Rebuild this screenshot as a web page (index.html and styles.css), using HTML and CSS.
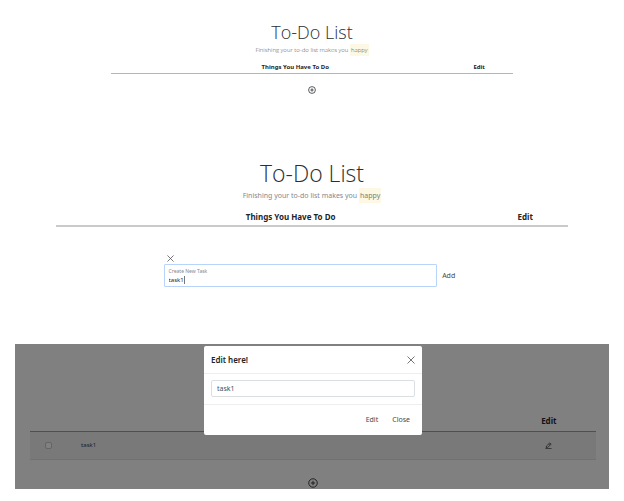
FILE: index.html
```html
<!DOCTYPE html>
<html lang="en">
<head>
<meta charset="utf-8">
<meta name="viewport" content="width=device-width, initial-scale=1">
<title>To-Do List</title>
<link rel="stylesheet" href="styles.css">
</head>
<body>
<svg class="sprite" aria-hidden="true">
  <symbol id="plus" viewBox="0 0 16 16"><path d="M8 1.2a6.8 6.8 0 1 0 0 13.6A6.8 6.8 0 0 0 8 1.2zM8 4.6v6.8M4.6 8h6.8" fill="none" stroke="currentColor" stroke-width="1.5"/></symbol>
  <symbol id="cross" viewBox="0 0 16 16"><path d="M1 1l14 14M15 1L1 15" fill="none" stroke="currentColor" stroke-width="1.8"/></symbol>
  <symbol id="pen" viewBox="0 0 16 16"><path d="M1 15h14M2.5 13l1-4L11 2l3 3-7.500 7zM9 4l3 3" fill="none" stroke="currentColor" stroke-width="1.7"/></symbol>
</svg>
<main>
  <section class="panel small">
    <h1>To-Do List</h1>
    <p class="lead">Finishing your to-do list makes you <mark>happy</mark></p>
    <table>
      <thead><tr><td class="check"></td><th scope="col">Things You Have To Do</th><th scope="col" class="edit">Edit</th></tr></thead>
    </table>
    <button class="icon-button plus" aria-label="Add task"><svg><use href="#plus"/></svg></button>
  </section>

  <section class="panel medium">
    <h1>To-Do List</h1>
    <p class="lead">Finishing your to-do list makes you <mark>happy</mark></p>
    <table>
      <thead><tr><td class="check"></td><th scope="col">Things You Have To Do</th><th scope="col" class="edit">Edit</th></tr></thead>
    </table>
    <form class="create">
      <button type="button" class="icon-button dismiss" aria-label="Cancel"><svg><use href="#cross"/></svg></button>
      <div class="create-row">
        <div class="field">
          <label for="new-task">Create New Task</label>
          <div class="entry"><input id="new-task" type="text" value="task1" size="1"><span class="caret"></span></div>
        </div>
        <button type="button" class="text-button">Add</button>
      </div>
    </form>
  </section>

  <section class="screen">
    <div class="backdrop">
      <table>
        <thead><tr><td class="check"></td><td></td><th scope="col" class="edit">Edit</th></tr></thead>
        <tbody><tr>
          <td class="check"><input type="checkbox" aria-label="Done"></td>
          <td class="task">task1</td>
          <td class="edit"><button class="icon-button pen" aria-label="Edit task"><svg><use href="#pen"/></svg></button></td>
        </tr></tbody>
      </table>
      <button class="icon-button plus" aria-label="Add task"><svg><use href="#plus"/></svg></button>
    </div>
    <div class="modal" role="dialog" aria-labelledby="modal-title">
      <header>
        <h2 id="modal-title">Edit here!</h2>
        <button class="icon-button" aria-label="Close dialog"><svg><use href="#cross"/></svg></button>
      </header>
      <div class="modal-body"><input type="text" value="task1" aria-label="Task name"></div>
      <footer>
        <button class="text-button">Edit</button>
        <button class="text-button">Close</button>
      </footer>
    </div>
  </section>
</main>
</body>
</html>
```
FILE: styles.css
```css
* { box-sizing: border-box; }

body {
  margin: 0;
  background: #fff;
  color: #212529;
  font: 7px/12px "Noto Sans", "Open Sans", sans-serif;
}

.sprite { display: none; }

main { padding: 20px 0 12px; }

h1, h2, p { margin: 0; }

h1 {
  color: #2b2f33;
  font-family: "Open Sans", "Noto Sans", sans-serif;
  font-weight: 300;
}

button, input { font: inherit; color: inherit; }

button {
  padding: 0;
  border: 0;
  background: none;
}

table {
  width: 100%;
  table-layout: fixed;
  border-collapse: collapse;
}

th, td { padding: 0; }
th { font-weight: 700; }
.check { width: 8.33%; }
.edit { width: 16.67%; text-align: center; }

.icon-button { display: block; line-height: 0; }
.icon-button svg { display: block; width: 7px; height: 7px; }
.text-button { color: #44484c; }

.panel {
  margin: 0 auto;
  text-align: center;
}

.lead { color: #82898f; }

mark {
  display: inline-block;
  padding: 0 1px;
  background: #fcf8e3;
  color: #7c8076;
}

.small { width: 64.3%; min-height: 138px; }
.small h1 { font-size: 18px; line-height: 24px; }
.small .lead {
  color: #4c555d;
  font-family: "Open Sans", "Noto Sans", sans-serif;
  font-size: 6px;
  font-weight: 300;
  line-height: 12px;
}
.small mark { color: #4c5046; }
.small table { margin-top: 5px; font-size: 6px; }
.small thead tr { height: 12px; border-bottom: 1px solid #b4b6b8; }
.small .plus { margin: 12px auto 0; }
.small .plus svg { width: 8px; height: 8px; }

.medium { width: 82%; min-height: 186px; }
.medium h1 { font-size: 23px; line-height: 30px; }
.medium .lead { font-size: 7px; line-height: 15px; }
.medium table { margin-top: 5px; font-size: 8px; }
.medium thead tr { height: 18px; border-bottom: 2px solid #c8cacc; }

.create { width: 57%; margin: 28px 0 0 21%; text-align: left; }
.dismiss { margin: 0 0 2px 3px; color: #555; }
.create-row { display: flex; align-items: center; gap: 5px; }

.field {
  flex: 1;
  min-width: 0;
  height: 23px;
  padding: 2px 4px;
  border: 1px solid #b9d4fb;
  border-radius: 1px;
}

.field label {
  display: block;
  color: #85898d;
  font-size: 5px;
  line-height: 9px;
}

.entry { display: flex; align-items: center; height: 8px; }
.entry input { width: 15px; height: 8px; padding: 0; border: 0; outline: 0; font-size: 6px; }
.caret { width: 1px; height: 8px; background: #777; }

.screen {
  position: relative;
  width: 95.2%;
  min-height: 145px;
  margin: 0 auto;
  background: #808080;
}

.backdrop { padding: 68px 13px 0 15px; }
.backdrop thead tr { height: 19px; border-bottom: 1px solid #4d4f50; }
.backdrop th { color: #111315; font-size: 8px; }
.backdrop tbody tr { height: 28px; border-bottom: 1px solid #707172; background: #797979; }
.backdrop .task { padding-left: 4px; color: #1b1d1f; font-size: 6px; }
.backdrop .plus { margin: 18px auto 0; color: #1b1d1f; }
.backdrop .plus svg { width: 10px; height: 10px; }
.backdrop .pen { margin: 0 auto; color: #222; }

input[type="checkbox"] {
  appearance: none;
  display: block;
  width: 7px;
  height: 7px;
  margin: 0 0 0 15px;
  border: 1px solid #656565;
  border-radius: 2px;
  background: #808080;
}

.modal {
  position: absolute;
  top: 2px;
  left: 50%;
  width: 218px;
  margin-left: -108px;
  border-radius: 2px;
  background: #fff;
}

.modal header {
  display: flex;
  align-items: center;
  justify-content: space-between;
  height: 28px;
  padding: 0 7px;
  border-bottom: 1px solid #eceef0;
}

.modal h2 { font-size: 8px; font-weight: 600; line-height: 12px; }
.modal header svg { width: 8px; height: 8px; color: #666; }
.modal-body { padding: 6px 7px 7px; border-bottom: 1px solid #eceef0; }

.modal-body input {
  display: block;
  width: 100%;
  height: 17px;
  padding: 0 5px;
  border: 1px solid #dcdfe2;
  border-radius: 2px;
  color: #495057;
}

.modal footer {
  display: flex;
  align-items: center;
  justify-content: flex-end;
  gap: 14px;
  height: 30px;
  padding: 0 12px;
}
```
